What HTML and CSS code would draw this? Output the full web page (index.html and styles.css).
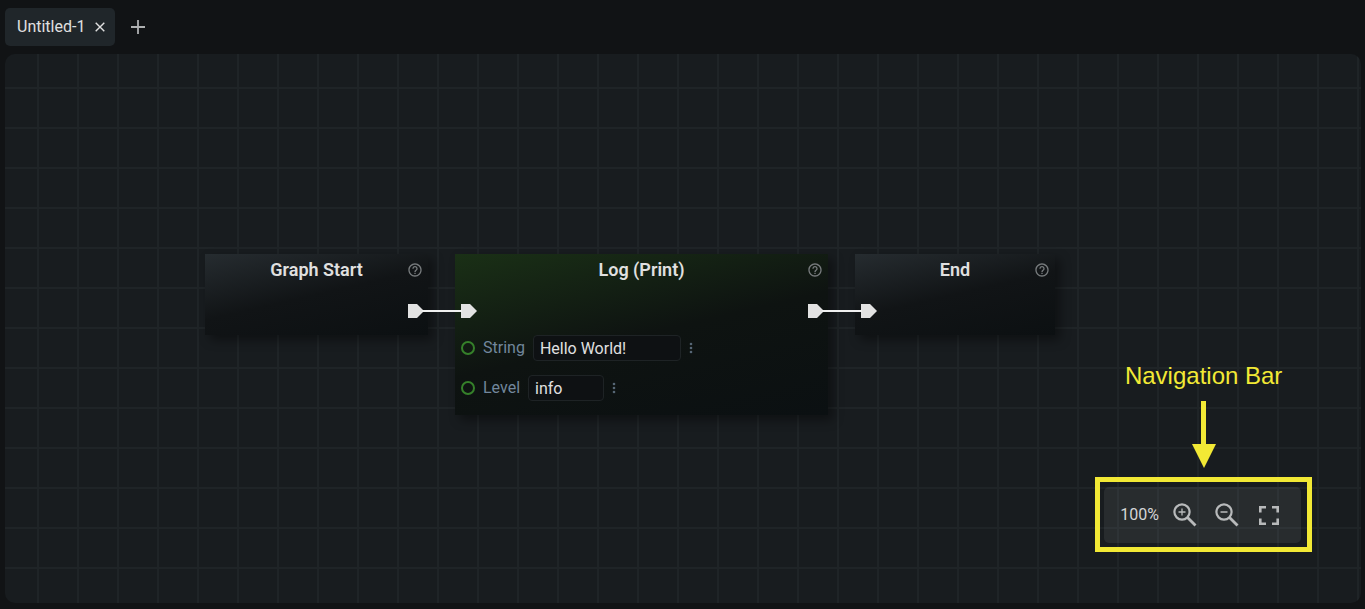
FILE: index.html
```html
<!DOCTYPE html>
<html lang="en">
<head>
<meta charset="utf-8">
<meta name="viewport" content="width=device-width, initial-scale=1">
<title>Graph Editor</title>
<link rel="stylesheet" href="styles.css">
</head>
<body>
<svg class="defs" aria-hidden="true">
  <symbol id="help" viewBox="0 0 24 24"><path fill="currentColor" d="M11 18h2v-2h-2v2zm1-16C6.480 2 2 6.480 2 12s4.480 10 10 10 10-4.480 10-10S17.520 2 12 2zm0 18c-4.410 0-8-3.590-8-8s3.590-8 8-8 8 3.590 8 8-3.590 8-8 8zm0-14c-2.210 0-4 1.790-4 4h2c0-1.100.9-2 2-2s2 .9 2 2c0 2-3 1.750-3 5h2c0-2.250 3-2.500 3-5 0-2.210-1.790-4-4-4z"/></symbol>
  <symbol id="pin" viewBox="0 0 16 14"><path fill="currentColor" d="M0 0h9l7 7-7 7H0z"/></symbol>
  <symbol id="dots" viewBox="0 0 4 12"><g fill="currentColor"><circle cx="2" cy="2" r="1.300"/><circle cx="2" cy="6" r="1.300"/><circle cx="2" cy="10" r="1.300"/></g></symbol>
</svg>
<header class="tabs">
  <div class="tab">
    <span>Untitled-1</span>
    <button class="icon-btn close" aria-label="Close tab"><svg width="10" height="10" viewBox="0 0 10 10"><path d="M.7.7l8.600 8.600M9.300.7L.7 9.300" stroke="currentColor" stroke-width="1.400"/></svg></button>
  </div>
  <button class="icon-btn add" aria-label="New tab"><svg width="14" height="14" viewBox="0 0 14 14"><path d="M7 0v14M0 7h14" stroke="currentColor" stroke-width="1.800"/></svg></button>
</header>
<main class="canvas">
  <section class="node node-start">
    <div class="node-head">
      <h2>Graph Start</h2>
      <button class="icon-btn help" aria-label="Help"><svg width="16" height="16"><use href="#help"/></svg></button>
    </div>
    <div class="pins"><svg class="pin out" width="16" height="14"><use href="#pin"/></svg></div>
  </section>
  <section class="node node-log">
    <div class="node-head">
      <h2>Log (Print)</h2>
      <button class="icon-btn help" aria-label="Help"><svg width="16" height="16"><use href="#help"/></svg></button>
    </div>
    <div class="pins"><svg class="pin" width="16" height="14"><use href="#pin"/></svg><svg class="pin out" width="16" height="14"><use href="#pin"/></svg></div>
    <div class="field">
      <span class="socket"></span>
      <label for="string">String</label>
      <input class="string-input" id="string" type="text" value="Hello World!">
      <button class="icon-btn more" aria-label="String options"><svg width="4" height="12"><use href="#dots"/></svg></button>
    </div>
    <div class="field">
      <span class="socket"></span>
      <label for="level">Level</label>
      <input class="level-input" id="level" type="text" value="info">
      <button class="icon-btn more" aria-label="Level options"><svg width="4" height="12"><use href="#dots"/></svg></button>
    </div>
  </section>
  <section class="node node-end">
    <div class="node-head">
      <h2>End</h2>
      <button class="icon-btn help" aria-label="Help"><svg width="16" height="16"><use href="#help"/></svg></button>
    </div>
    <div class="pins"><svg class="pin" width="16" height="14"><use href="#pin"/></svg></div>
  </section>
  <div class="wire wire-a"></div>
  <div class="wire wire-b"></div>

  <aside class="callout">
    <p>Navigation Bar</p>
    <svg class="arrow" width="24" height="68" viewBox="0 0 24 68"><path fill="currentColor" d="M9 1h5v43h10L12 68 0 44h9z"/></svg>
    <div class="frame">
      <nav class="navbar">
        <span class="zoom">100%</span>
        <button class="icon-btn" aria-label="Zoom in"><svg width="24" height="24" viewBox="0 0 24 24" fill="none" stroke="currentColor"><circle cx="9" cy="9" r="7.600" stroke-width="2.200"/><path d="M14.500 14.500l8 8" stroke-width="2.800"/><path d="M9 5.500v7M5.500 9h7" stroke-width="1.300"/></svg></button>
        <button class="icon-btn" aria-label="Zoom out"><svg width="24" height="24" viewBox="0 0 24 24" fill="none" stroke="currentColor"><circle cx="9" cy="9" r="7.600" stroke-width="2.200"/><path d="M14.500 14.500l8 8" stroke-width="2.800"/><path d="M5.500 9h7" stroke-width="1.500"/></svg></button>
        <button class="icon-btn" aria-label="Fit to screen"><svg width="24" height="24" viewBox="0 0 24 24" fill="none" stroke="currentColor" stroke-width="2.600"><path d="M3.300 9.500V4.300H9M15 4.300h5.700v5.200M20.700 15.500v5.200H15M9 20.700H3.300v-5.200"/></svg></button>
      </nav>
    </div>
  </aside>
</main>
</body>
</html>
```
FILE: styles.css
```css
* { box-sizing: border-box; }

body {
  margin: 0;
  min-height: 100vh;
  display: flex;
  flex-direction: column;
  padding: 8px 4px 6px 5px;
  gap: 8px;
  background: #111315;
  color: #e0e0e0;
  font: 16px/20px Roboto, sans-serif;
}

.defs { display: none; }

.icon-btn {
  display: flex;
  padding: 0;
  border: 0;
  background: none;
  color: inherit;
}

.tabs { display: flex; align-items: center; gap: 16px; }

.tab {
  display: flex;
  align-items: center;
  gap: 10px;
  height: 38px;
  padding: 0 10px 0 12px;
  border-radius: 5px;
  background: #20262a;
}

.add { color: #aeb0b1; }

.canvas {
  position: relative;
  flex: 1;
  overflow: hidden;
  border-radius: 10px;
  background-color: #181c1f;
  background-image:
    linear-gradient(90deg, #1f2427 2px, transparent 2px),
    linear-gradient(#1f2427 2px, transparent 2px);
  background-size: 40px 40px;
  background-position: 32px 33px;
}

.node {
  position: absolute;
  top: 200px;
  padding-bottom: 17px;
  background: linear-gradient(167deg, #262c30, #111416 50%, #0c1012);
  box-shadow: 5px 5px 10px rgba(0, 0, 0, 0.4);
}

.node-start { left: 200px; width: 223px; }

.node-log {
  left: 450px;
  width: 373px;
  padding-bottom: 7px;
  background: linear-gradient(167deg, #1a3016, #0e1311 50%, #0b1012);
}

.node-end { left: 850px; width: 200px; }

.node-head {
  display: grid;
  grid-template-columns: 21px 1fr 21px;
  align-items: center;
  height: 32px;
}

.node-head h2 {
  grid-column: 2;
  margin: 0;
  font-size: 18px;
  font-weight: 600;
  text-align: center;
}

.help { color: #777b7d; }

.pins {
  display: flex;
  padding: 18px 4px 0 6px;
}

.pin { color: #e2e2e2; }
.out { margin-left: auto; }

.field {
  display: flex;
  align-items: center;
  height: 40px;
  padding-left: 6px;
}

.pins + .field { margin-top: 10px; }

.socket {
  width: 14px;
  height: 14px;
  margin-right: 8px;
  border: 2px solid #35802a;
  border-radius: 50%;
}

.field label { color: #72879c; }

.field input {
  height: 26px;
  margin: 0 8px;
  padding: 0 6px;
  border: 1px solid #1e2325;
  border-radius: 4px;
  background: #0e1113;
  color: #e0e0e0;
  font: inherit;
}

.string-input { width: 148px; }
.level-input { width: 76px; }
.more { color: #566675; }

.wire {
  position: absolute;
  top: 256px;
  height: 2px;
  background: #f0f0f0;
}

.wire-a { left: 417px; width: 40px; }
.wire-b { left: 817px; width: 40px; }

.callout {
  position: absolute;
  right: 49px;
  bottom: 51px;
  display: flex;
  flex-direction: column;
  align-items: center;
  color: #f2e935;
}

.callout p {
  margin: 0 0 10px;
  font: 24px/28px "Liberation Sans", Arial, sans-serif;
}

.arrow { margin-bottom: 9px; }

.frame {
  padding: 5px 6px 4px 4px;
  border: 5px solid #f2e935;
}

.navbar {
  display: flex;
  align-items: center;
  gap: 18px;
  height: 56px;
  padding: 0 20px 0 16px;
  border-radius: 5px;
  background: rgba(255, 255, 255, 0.07);
  color: #b8babb;
}

.zoom { margin-right: -4px; color: #d4d5d6; }
```
